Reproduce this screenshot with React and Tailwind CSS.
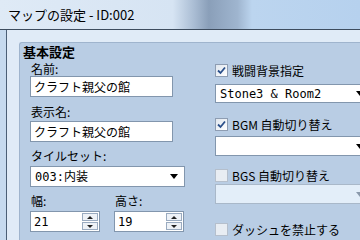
import React from "react"

const jp = { fontFamily: '"Noto Sans CJK JP", "Noto Sans", sans-serif' }
const mono = { fontFamily: '"DejaVu Sans Mono", "Noto Sans CJK JP", monospace' }

function CheckBox({ checked, disabled, label, className }) {
    return (
        <div className={"flex items-center gap-[4px] h-[13px] " + className}>
            <div
                className={
                    "w-[13px] h-[13px] border flex items-center justify-center " +
                    (disabled
                        ? "border-[#b5bfcc] bg-[#e8edf3]"
                        : "border-[#8e9db2] bg-[linear-gradient(135deg,#dfe6ee,#ffffff)]")
                }
            >
                {checked && (
                    <svg width="9" height="9" viewBox="0 0 9 9">
                        <path d="M1 4.5 L3.5 7 L8 1.5" stroke="#2a4f8a" strokeWidth="1.8" fill="none" />
                    </svg>
                )}
            </div>
            <span className="text-[12px] leading-[14px] text-black">{label}</span>
        </div>
    )
}

function Select({ value, className, disabled }) {
    return (
        <div
            className={
                "flex items-center justify-between border pl-[4px] pr-[6px] " +
                (disabled ? "border-[#a9b8c9] bg-[#e3eef9]" : "border-[#8296ad] bg-white") +
                " " + className
            }
        >
            <span className="text-[12px] leading-[14px]" style={mono}>{value}</span>
            <svg width="8" height="5" viewBox="0 0 8 5">
                <path d="M0 0 H8 L4 5 Z" fill={disabled ? "#8a99ab" : "#000"} />
            </svg>
        </div>
    )
}

function Spin({ value }) {
    return (
        <div className="flex items-center justify-between w-[70px] h-[21px] bg-white border border-[#8296ad] pl-[3px] pr-[1px]">
            <span className="text-[12px] leading-[14px]" style={mono}>{value}</span>
            <div className="flex flex-col gap-[1px]">
                <div className="w-[16px] h-[8px] border border-[#9aabc0] bg-[#eef2f7] flex items-center justify-center">
                    <svg width="6" height="3" viewBox="0 0 6 3"><path d="M0 3 H6 L3 0 Z" fill="#222" /></svg>
                </div>
                <div className="w-[16px] h-[8px] border border-[#9aabc0] bg-[#eef2f7] flex items-center justify-center">
                    <svg width="6" height="3" viewBox="0 0 6 3"><path d="M0 0 H6 L3 3 Z" fill="#222" /></svg>
                </div>
            </div>
        </div>
    )
}

export default function App() {
    return (
        <div className="w-[360px] h-[240px] overflow-hidden flex flex-col bg-[#c9dcf0] text-black" style={jp}>
            {/* タイトルバー */}
            <div className="h-[30px] shrink-0 flex items-center pl-[8px] border-b border-[#3d4c5e] bg-[linear-gradient(90deg,#dfeaf6_0%,#d6e4f3_48%,#a9bcd3_54%,#8a9fb9_58%,#9fb5cf_66%,#bcd5ef_70%,#b6d1ee_100%)]">
                <span className="text-[13px] leading-[16px] text-black">マップの設定 - ID:002</span>
            </div>
            <div className="flex flex-1">
                <div className="w-[7px] shrink-0 bg-[#c6daef] border-r border-[#4b5f76]" />
                <div className="flex-1 bg-[#e0ebf7] pt-[12px] pl-[12px] flex">
                    <section className="flex-1 bg-[#b9cde4] border-l border-t border-[#9fb4cd] rounded-tl-[3px] flex flex-col">
                        <div className="mt-[2px] h-[14px] pl-[3px] text-[13px] leading-[14px] font-bold">基本設定</div>
                        <div className="flex">
                            <div className="ml-[10px] w-[155px] flex flex-col">
                                <div className="mt-[3px] h-[14px] text-[12px] leading-[14px] pl-[1px]">名前:</div>
                                <div className="mt-[0px] w-[143px] h-[21px] bg-white border border-[#8296ad] pl-[3px] flex items-center text-[12px]">クラフト親父の館</div>
                                <div className="mt-[8px] h-[14px] text-[12px] leading-[14px] pl-[1px]">表示名:</div>
                                <div className="mt-[2px] w-[143px] h-[21px] bg-white border border-[#8296ad] pl-[3px] flex items-center text-[12px]">クラフト親父の館</div>
                                <div className="mt-[7px] h-[14px] text-[12px] leading-[14px] pl-[1px]">タイルセット:</div>
                                <Select value="003:内装" className="mt-[3px] w-[155px] h-[21px]" />
                                <div className="mt-[7px] flex">
                                    <div className="w-[84px] flex flex-col">
                                        <div className="h-[14px] text-[12px] leading-[14px] pl-[1px]">幅:</div>
                                        <div className="mt-[3px]"><Spin value="21" /></div>
                                    </div>
                                    <div className="flex flex-col">
                                        <div className="h-[14px] text-[12px] leading-[14px] pl-[1px]">高さ:</div>
                                        <div className="mt-[3px]"><Spin value="19" /></div>
                                    </div>
                                </div>
                            </div>
                            <div className="ml-[30px] flex flex-col shrink-0">
                                <CheckBox checked label="戦闘背景指定" className="mt-[5px]" />
                                <Select value="Stone3 & Room2" className="mt-[7px] w-[156px] h-[19px]" />
                                <CheckBox checked label="BGM 自動切り替え" className="mt-[15px]" />
                                <Select value="" className="mt-[5px] w-[156px] h-[20px]" />
                                <CheckBox disabled label="BGS 自動切り替え" className="mt-[13px]" />
                                <Select value="" disabled className="mt-[2px] w-[156px] h-[20px]" />
                                <CheckBox disabled label="ダッシュを禁止する" className="mt-[19px]" />
                            </div>
                        </div>
                    </section>
                </div>
            </div>
        </div>
    )
}
